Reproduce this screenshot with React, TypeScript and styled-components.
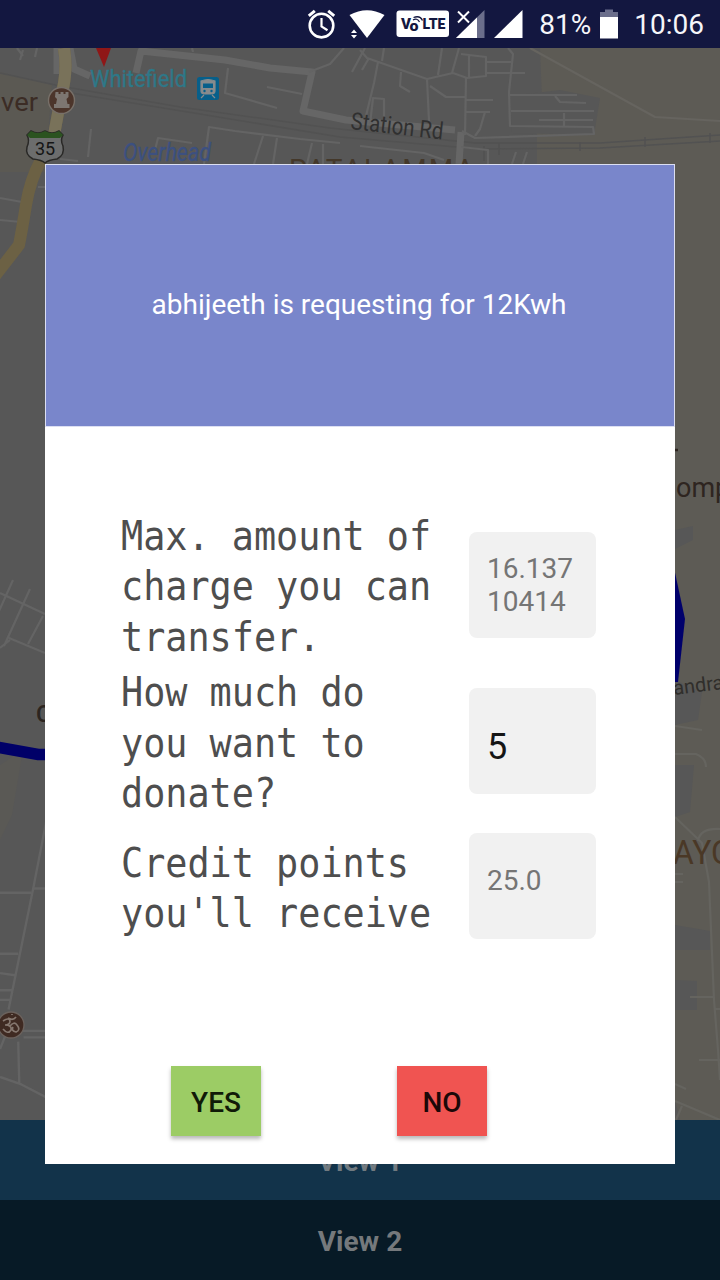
import React from 'react';
import styled, { createGlobalStyle } from 'styled-components';

const GlobalStyle = createGlobalStyle`
  * { box-sizing: border-box; }
  body { margin: 0; background: #575757; font-family: Roboto, "Liberation Sans", sans-serif; }
`;

const Screen = styled.div`
  position: relative;
  width: 720px;
  height: 1280px;
  display: flex;
  flex-direction: column;
  overflow: hidden;
`;

const StatusBar = styled.header`
  height: 48px;
  flex: none;
  display: flex;
  align-items: center;
  justify-content: flex-end;
  padding-right: 16px;
  background: #131740;
  color: #f6f6fa;
  font-size: 28px;
  line-height: 48px;
`;

const StatusIcons = styled.svg`
  width: 230px;
  height: 48px;
  margin-right: 5px;
  flex: none;
`;

const BatteryIcon = styled.svg`
  width: 20px;
  height: 48px;
  margin: 0 15px 0 8px;
`;

const StatusText = styled.span`
  padding-top: 2px;
`;

const MapArea = styled.svg`
  width: 720px;
  height: 1072px;
  flex: none;
  display: block;
  background: #575757;
`;

const ViewButton = styled.div<{ $bg: string; $color: string }>`
  height: 80px;
  flex: none;
  display: flex;
  align-items: center;
  justify-content: center;
  padding-top: 3px;
  background: ${(p) => p.$bg};
  color: ${(p) => p.$color};
  font-size: 28px;
  font-weight: 700;
`;

const Dialog = styled.section`
  position: absolute;
  left: 45px;
  top: 164px;
  width: 630px;
  height: 1000px;
  display: flex;
  flex-direction: column;
  background: #fff;
`;

const DialogHeader = styled.div`
  height: 263px;
  flex: none;
  display: flex;
  align-items: center;
  justify-content: center;
  padding: 18px 2px 0 0;
  background: #7986cb;
  border: 1px solid #dcdff2;
  color: #fff;
  font-size: 28px;
`;

const Form = styled.div`
  display: flex;
  flex-direction: column;
  padding: 84px 79px 0 76px;
`;

const Field = styled.div<{ $gap: number }>`
  display: flex;
  align-items: center;
  justify-content: space-between;
  margin-bottom: ${(p) => p.$gap}px;
`;

const Label = styled.div`
  width: 340px;
  margin-right: -40px;
  color: #4e4e4e;
  font-family: "DejaVu Sans Mono", monospace;
  font-size: 40.4px;
  line-height: 50.4px;
  white-space: pre;
  transform: scaleX(0.911);
  transform-origin: left center;
`;

const Value = styled.div<{ $active?: boolean; $top: number }>`
  width: 127px;
  height: 106px;
  flex: none;
  margin-bottom: 3px;
  padding: ${(p) => p.$top}px 18px 0;
  border-radius: 8px;
  background: #f1f1f1;
  color: ${(p) => (p.$active ? '#151515' : '#757575')};
  font-size: ${(p) => (p.$active ? 36 : 28)}px;
  line-height: 33px;
  white-space: pre;
`;

const Actions = styled.div`
  display: flex;
  gap: 136px;
  margin-top: auto;
  padding: 0 0 28px 126px;
`;

const ActionButton = styled.button<{ $bg: string; $color: string }>`
  width: 90px;
  height: 70px;
  padding: 3px 0 0;
  border: 0;
  background: ${(p) => p.$bg};
  color: ${(p) => p.$color};
  font-family: Roboto, sans-serif;
  font-size: 28px;
  font-weight: 500;
  box-shadow: 0 3px 4px rgba(0, 0, 0, 0.28);
`;

function StatusGlyphs() {
  return (
    <StatusIcons viewBox="304 0 230 48" fill="#fff">
      <g fill="none" stroke="#fff" strokeWidth="2.6">
        <circle cx="321.500" cy="25.6" r="11.8" />
        <path d="M321.500 18v8.5l6 3.8" strokeWidth="2.2" />
        <path d="M308.800 15.8l6-5M334.200 15.8l-6-5" strokeWidth="3" />
      </g>
      <path d="M349.500 15Q367 5.500 384.500 15L367 38z" />
      <path d="M351 33l3-3.500 3 3.500zM351 35l3 3.500 3-3.500z" />
      <rect x="396.500" y="10.500" width="52.500" height="26.500" rx="3" />
      <g fill="#131740" fontFamily="Roboto, sans-serif" fontWeight="900">
        <text x="401" y="29.300" fontSize="15" textLength="10" lengthAdjust="spacingAndGlyphs">V</text>
        <text x="409.500" y="30.500" fontSize="15" textLength="9" lengthAdjust="spacingAndGlyphs">o</text>
        <text x="422.500" y="29.300" fontSize="15" textLength="23" lengthAdjust="spacingAndGlyphs">LTE</text>
      </g>
      <path d="M413 20q4-2.500 6.500 2M413.500 17.500q6.500-2.500 9 3" fill="none" stroke="#131740" strokeWidth="1.300" />
      <path d="M484.500 10v28H456z" fill="#6b6e8b" />
      <path d="M477 17.500V38H456z" />
      <path d="M458 11.500l11 11M469 11.500l-11 11" stroke="#fff" strokeWidth="2" />
      <path d="M522.500 10v28H494z" />
    </StatusIcons>
  );
}

function MapBackdrop() {
  return (
    <MapArea viewBox="0 48 720 1072" fontFamily="Roboto, sans-serif">
      <path d="M540 48H720V1120H680Q672 1085 660 1060V170H537V100H542z" fill="#5d5b55" />
      <path d="M0 72L52 85 45 172H0z" fill="#5b5953" />
      <path d="M560 90L600 98 594 135 512 133 510 96z" fill="#575757" />
      <path d="M675 530L693 526 693 540 675 549zM675 680L702 692 698 720 675 725zM675 765H694L690 812 675 817zM675 925L710 931V950H675zM675 980L697 981V1010H675z" fill="#575757" />
      <path d="M0 765L23 750 12 815 0 840z" fill="#5a5955" />
      <g fill="none" stroke="#525252" strokeWidth="1.500">
        <path d="M0 73L60 86 180 107 330 128 475 143 600 143 720 135" />
        <path d="M65 92L200 114 340 137 480 149 600 148 720 141" />
        <path d="M580 142v9M645 137v10M710 133v10M484 146v15M499 143v12" />
      </g>
      <g fill="none" stroke="#666" strokeWidth="7" strokeLinejoin="round">
        <path d="M57 48L57 74M70 48L74 69 90 76" />
        <path d="M136 73L141 51 225 60 270 68 312 72 303 111 346 120 455 130" />
        <path d="M461 132L459 164" />
      </g>
      <g fill="none" stroke="#646464" strokeWidth="2.200" strokeLinejoin="round">
        <path d="M192 48l1 4M309 72L330 64 344 48M352 72L365 48" />
        <path d="M228 68L225 93 277 108M267 87L302 94" />
        <path d="M17 48l6 8M23 50l-3 10M37 48l-2 9M91 129l-3 28M60 159L78 161" />
        <path d="M204 164L209 127 235 131 300 139 340 143M155 150L158 138 192 143M263 136l-9 28M277 138l-4 26M312 143l-5 21M323 144v20" />
        <path d="M360 50L367 58 427 79 453 73 467 78 486 76V57L461 54M384 48l-2 13M362 70l7-12M442 48l-4 27M459 48l-7 25M469 55v22M378 62L374 83 365 120M401 72L400 86 410 92M427 79L429 121M430 86L446 97H465M466 78L465 135M486 62H511M486 73H525M465 100H493M465 112H490M485 112L480 129 475 136" />
        <path d="M508 48L513 54 509 92 510 126 593 127 594 134 475 138 462 131M510 95H577M511 111H594M539 120H593M564 113v14M555 96l5 6 26 1M370 124L373 98 384 99 384 116" />
        <path d="M360 146L424 153 444 160M461 147L488 150V164M516 152l-4 12M527 152l-4 12" />
        <path d="M530 48L655 117 720 121" stroke="#66645f" />
        <path d="M0 198L22 202M0 220L21 222M38 187h7" />
        <path d="M0 593L45 614M13 580L-5 620M30 589L4 646M43 616L28 644M9 638L45 653M0 648l10-8" />
        <path transform="translate(0 640) scale(1.071) translate(0 -640)" d="M45 800L31 872 8 985M31 872H45M0 876H29M0 933H17M0 951L14 953M0 967H12M0 976H10M20 1005H45M22 1011H45M17 1015L18 1054M0 1048L20 1055 45 1068M0 1022l8-20" />
        <path d="M675 726L702 730M675 754H696Q706 758 706 767M675 817L702 843 709 882 714 1000 718 1050 720 1080M698 841Q700 828 720 829M675 874H683M675 882H683M690 997H713M715 1009H720M699 1060H720M675 1084L686 1089M675 1101L720 1120M682 1106l-6 14" stroke="#65645f" />
      </g>
      <path d="M64 48Q68 72 61 97L54 135 41 160Q30 180 26 205T19 245L-5 276" fill="none" stroke="#6c6144" strokeWidth="12" />
      <path d="M64 48Q68 72 61 97L54 135" fill="none" stroke="#79725a" strokeWidth="12" />
      <path d="M96 48H111L104 67z" fill="#8f1717" />
      <text x="90" y="87" fontSize="24.500" fill="#2e7888" stroke="#2e7888" strokeWidth="0.300" textLength="97" lengthAdjust="spacingAndGlyphs">Whitefield</text>
      <text x="1" y="111" fontSize="26" fill="#3b2c25" textLength="37" lengthAdjust="spacingAndGlyphs">ver</text>
      <text x="123" y="161" fontSize="25" fontStyle="italic" fill="#3c5080" stroke="#3c5080" strokeWidth="0.300" textLength="88" lengthAdjust="spacingAndGlyphs">Overhead</text>
      <text x="350" y="129" fontSize="24" fill="#303030" transform="rotate(6.500 350 129)" textLength="93" lengthAdjust="spacingAndGlyphs">Station Rd</text>
      <text x="289" y="179" fontSize="28" fill="#44382a" textLength="185" lengthAdjust="spacing">PATALAMMA</text>
      <text x="36" y="722" fontSize="24" fontWeight="500" fill="#2c2520">C</text>
      <text x="676" y="497" fontSize="27" fill="#2e2520">omp</text>
      <path d="M675 450h3" stroke="#2e2520" strokeWidth="2.500" />
      <text x="673" y="864" fontSize="33" fill="#4a3826" textLength="60" lengthAdjust="spacingAndGlyphs">AYO</text>
      <rect x="197" y="77" width="22" height="23" rx="2.500" fill="#075f8a" />
      <path d="M201 81q7-3 14 0v10q0 3-4 3h-6q-4 0-4-3zM204 95l-3 3M212 95l3 3" fill="#878b8d" stroke="#878b8d" strokeWidth="1.200" />
      <path d="M203 83.500h10v4.500h-10z" fill="#075f8a" />
      <circle cx="204.500" cy="91" r="1.200" fill="#075f8a" />
      <circle cx="211.500" cy="91" r="1.200" fill="#075f8a" />
      <circle cx="61.500" cy="100.500" r="13" fill="#4c352b" stroke="#777069" strokeWidth="1.400" />
      <path d="M55.500 92h3v2h2v-2h3v2h2v-2h3v5l-2 2 1 5h2v4H54v-4h2l1-5-2-2z" fill="#7d7671" />
      <path d="M27 135L31 131Q38 135 45 131Q52 135 59 131L63 135Q60 140 63 146Q65 155 57 159Q48 160 45 163Q42 160 33 159Q25 155 27 147Q30 140 27 135z" fill="#6c6d6d" stroke="#292826" strokeWidth="1.500" />
      <path d="M27 135L31 131Q38 135 45 131Q52 135 59 131L63 135 60 138H30z" fill="#2b5320" />
      <text x="35" y="155" fontSize="18" fill="#151515">35</text>
      <path d="M-3 747L38 754.500H47" fill="none" stroke="#000068" strokeWidth="11.500" />
      <path d="M674 568L685 619 678 682H674z" fill="#00006c" />
      <text x="674" y="695" fontSize="20" fill="#302e2b" transform="rotate(-7 674 695)">andra</text>
      <circle cx="11" cy="1025" r="13" fill="#3f2a22" stroke="#6b625d" strokeWidth="1.300" />
      <path d="M3 1021q6-4 7 0 0 4-5 4 7 0 6 5-3 5-8-1M10 1026q4-5 7-1 4 5-1 7-5-1-3-5M8 1018q5 3 8-1M12 1014v1" fill="none" stroke="#85776f" strokeWidth="1.700" />
    </MapArea>
  );
}

export default function App() {
  return (
    <Screen>
      <GlobalStyle />
      <StatusBar>
        <StatusGlyphs />
        <StatusText>81%</StatusText>
        <BatteryIcon viewBox="0 0 20 48">
          <path d="M6 9.500h8V12h5v6H1v-6h5z" fill="#6b6e8b" />
          <path d="M1 17h18v21.500H1z" fill="#fff" />
        </BatteryIcon>
        <StatusText>10:06</StatusText>
      </StatusBar>
      <MapBackdrop />
      <ViewButton $bg="#12334a" $color="#717a80">View 1</ViewButton>
      <ViewButton $bg="#071a26" $color="#75797c">View 2</ViewButton>
      <Dialog>
        <DialogHeader>abhijeeth is requesting for 12Kwh</DialogHeader>
        <Form>
          <Field $gap={5}>
            <Label>{'Max. amount of\ncharge you can\ntransfer.'}</Label>
            <Value $top={20}>{'16.137\n10414'}</Value>
          </Field>
          <Field $gap={15}>
            <Label>{'How much do\nyou want to\ndonate?'}</Label>
            <Value $active $top={43}>5</Value>
          </Field>
          <Field $gap={0}>
            <Label>{"Credit points\nyou'll receive"}</Label>
            <Value $top={31}>25.0</Value>
          </Field>
        </Form>
        <Actions>
          <ActionButton $bg="#9ccc65" $color="#101a08">YES</ActionButton>
          <ActionButton $bg="#f05451" $color="#1c0808">NO</ActionButton>
        </Actions>
      </Dialog>
    </Screen>
  );
}
